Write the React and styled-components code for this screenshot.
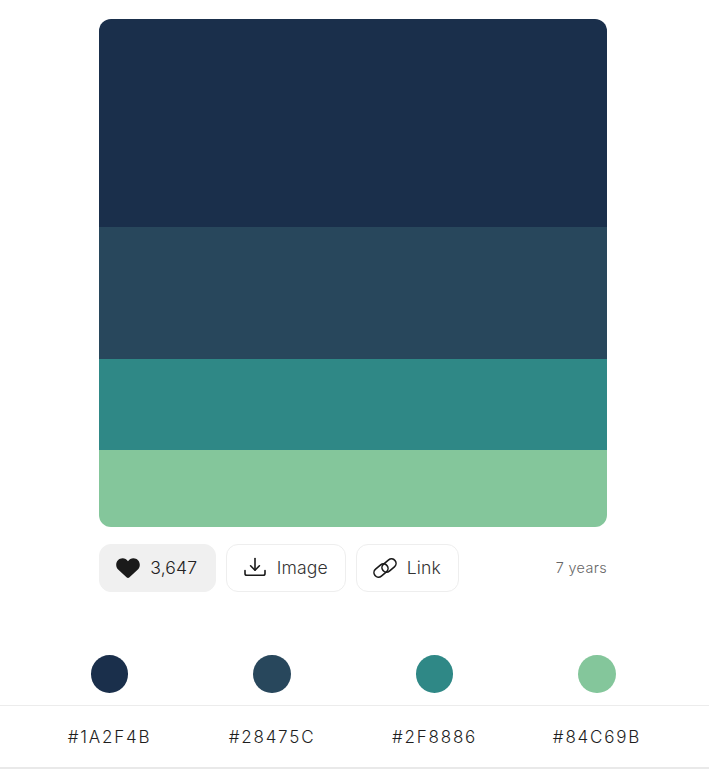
import React from "react";
import styled, { createGlobalStyle } from "styled-components";

const GlobalStyle = createGlobalStyle`
  html, body {
    margin: 0;
    padding: 0;
    background: #ffffff;
    font-family: Inter, "Liberation Sans", sans-serif;
    color: #333333;
  }
`;

const Page = styled.div`
  width: 709px;
  height: 772px;
  overflow: hidden;
  padding-top: 19px;
  box-sizing: border-box;
`;

const Main = styled.div`
  width: 508px;
  margin-left: 99px;
`;

const Palette = styled.div`
  display: flex;
  flex-direction: column;
  height: 508px;
  border-radius: 12px;
  overflow: hidden;
`;

const Stripe = styled.div`
  height: ${(p) => p.$h}px;
  background: ${(p) => p.$color};
`;

const Toolbar = styled.div`
  display: flex;
  align-items: center;
  gap: 10px;
  margin-top: 17px;
`;

const Button = styled.div`
  display: flex;
  align-items: center;
  justify-content: center;
  gap: 10px;
  width: ${(p) => p.$w}px;
  height: 48px;
  padding: 0 1.5px 1px 0;
  box-sizing: border-box;
  border-radius: 12px;
  border: 1px solid ${(p) => (p.$filled ? "#f0f0f0" : "#eeeeee")};
  background: ${(p) => (p.$filled ? "#f0f0f0" : "#ffffff")};
  font-size: 17.6px;
  font-weight: 350;
  letter-spacing: 0.12px;
  color: ${(p) => (p.$filled ? "#222222" : "#333333")};
`;

const Age = styled.div`
  margin-left: auto;
  margin-bottom: 2px;
  font-size: 14.4px;
  letter-spacing: 0.35px;
  font-weight: 350;
  color: #666666;
`;

const Colors = styled.div`
  display: grid;
  grid-template-columns: repeat(4, 162.5px);
  margin: 63px 0 0 28.25px;
`;

const DotCell = styled.div`
  display: flex;
  justify-content: center;
  height: 38px;
`;

const Dot = styled.div`
  width: 37.5px;
  height: 38px;
  border-radius: 50%;
  background: ${(p) => p.$color};
`;

const CodeRow = styled.div`
  margin-top: 12px;
  height: 64px;
  box-sizing: border-box;
  border-top: 1px solid #ececec;
  border-bottom: 2px solid #e9e9e9;
`;

const Codes = styled.div`
  display: grid;
  grid-template-columns: repeat(4, 162.5px);
  margin-left: 28.25px;
  height: 100%;
  align-items: center;
`;

const Code = styled.div`
  text-align: center;
  font-size: 17px;
  font-weight: 350;
  letter-spacing: 1.8px;
  color: #1e1e1e;
`;

const stripes = [
  { color: "#1a2f4b", h: 208 },
  { color: "#28475c", h: 132 },
  { color: "#2f8886", h: 91 },
  { color: "#84c69b", h: 77 },
];

const HeartIcon = () => (
  <svg width="24" height="24" viewBox="0 0 24 24" fill="#1a1a1a">
    <path d="M12 22 C11.5 22 11 21.7 10.5 21.3 L2.4 13.8 C0.9 12.4 0.2 10.8 0.2 8.8 C0.2 5 3 2.2 6.6 2.2 C8.8 2.2 10.7 3.3 12 5.2 C13.3 3.3 15.2 2.2 17.4 2.2 C21 2.2 23.8 5 23.8 8.8 C23.8 10.8 23.1 12.4 21.6 13.8 L13.5 21.3 C13 21.7 12.5 22 12 22 Z" />
  </svg>
);

const DownloadIcon = () => (
  <svg width="24" height="24" viewBox="0 0 24 24" fill="none" stroke="#1a1a1a" strokeWidth="1.6" strokeLinecap="round" strokeLinejoin="round">
    <path d="M12 2.5 V14" />
    <path d="M7.6 9.8 L12 14.2 L16.4 9.8" />
    <path d="M2 14.5 V17.4 C2 18.6 2.7 19.2 3.8 19.2 H20.2 C21.3 19.2 22 18.6 22 17.4 V14.5" />
  </svg>
);

const LinkIcon = () => (
  <svg width="24" height="24" viewBox="0 0 24 24" fill="none" stroke="#1a1a1a" strokeWidth="1.6">
    <rect x="0.2" y="10" width="15.6" height="9" rx="4.5" transform="rotate(-40 8 14.5)" />
    <rect x="8.2" y="5" width="15.6" height="9" rx="4.5" transform="rotate(-40 16 9.5)" />
  </svg>
);

const App = () => {
  return (
    <Page>
      <GlobalStyle />
      <Main>
        <Palette>
          {stripes.map((s) => (
            <Stripe key={s.color} $color={s.color} $h={s.h} />
          ))}
        </Palette>
        <Toolbar>
          <Button $filled $w={117}>
            <HeartIcon />
            3,647
          </Button>
          <Button $w={120}>
            <DownloadIcon />
            Image
          </Button>
          <Button $w={103}>
            <LinkIcon />
            Link
          </Button>
          <Age>7 years</Age>
        </Toolbar>
      </Main>
      <Colors>
        {stripes.map((s) => (
          <DotCell key={s.color}>
            <Dot $color={s.color} />
          </DotCell>
        ))}
      </Colors>
      <CodeRow>
        <Codes>
          {stripes.map((s) => (
            <Code key={s.color}>{s.color.toUpperCase()}</Code>
          ))}
        </Codes>
      </CodeRow>
    </Page>
  );
};

export default App;
